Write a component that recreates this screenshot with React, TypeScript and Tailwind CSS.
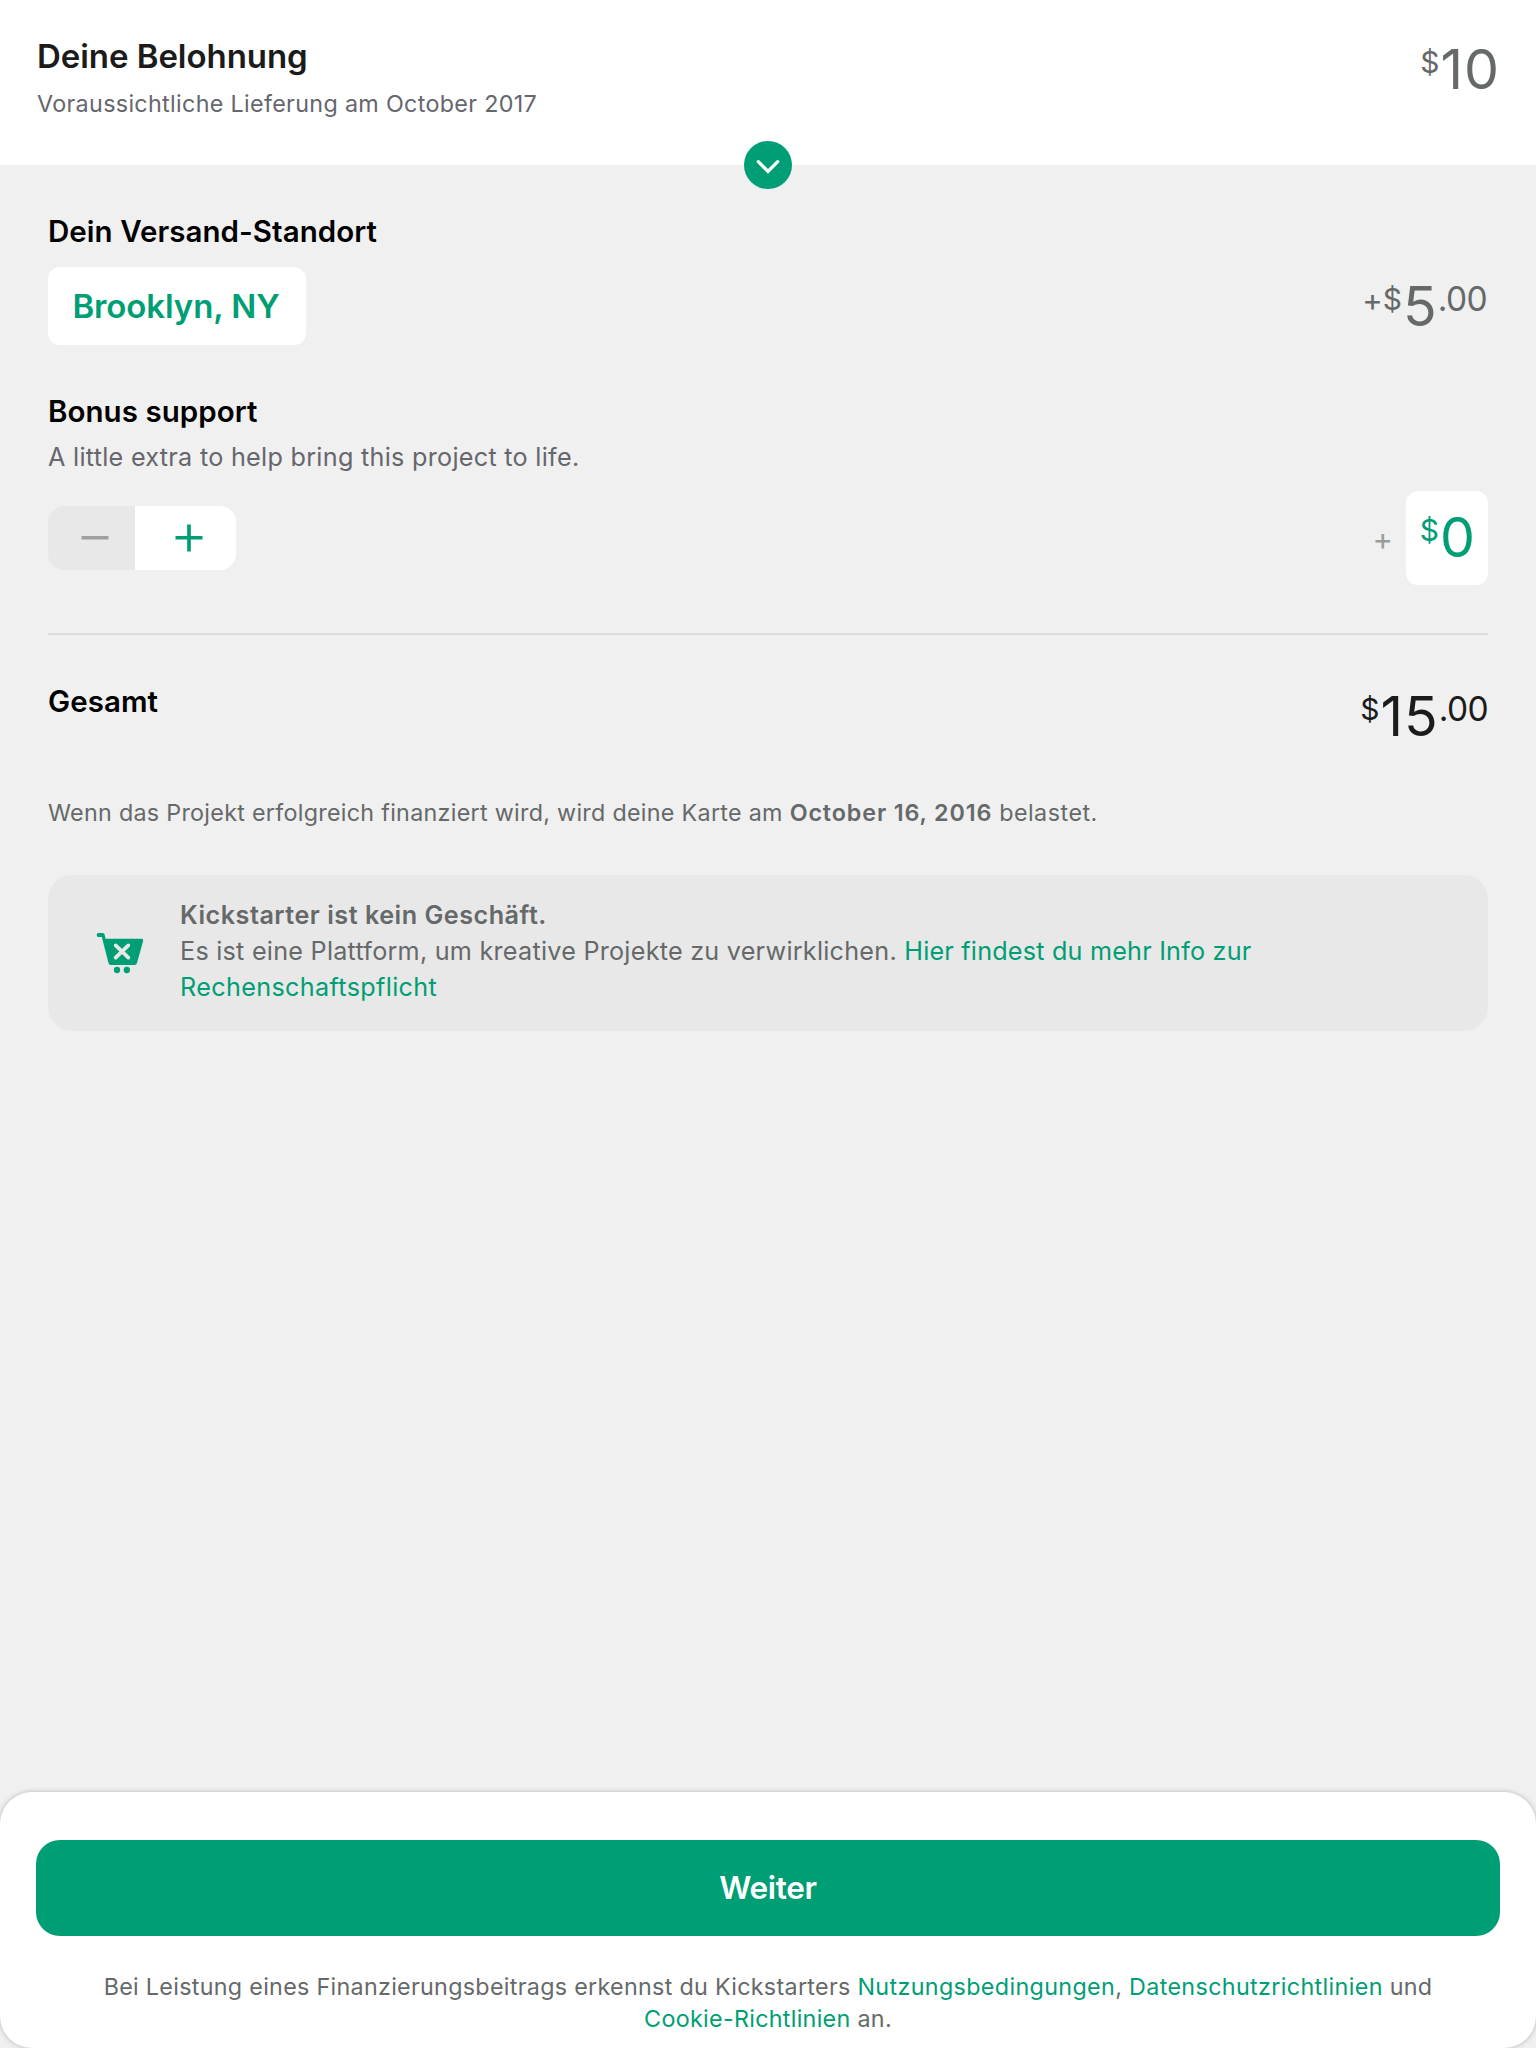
import type { ReactNode } from "react";

function Amount({ sign = false, whole, cents, className }: { sign?: boolean; whole: string; cents?: string; className: string }) {
  return (
    <div className={`flex h-16 items-start whitespace-nowrap ${className}`}>
      {sign && <span className="text-[31px] leading-[51px]">+</span>}
      <span className="mr-px text-[30px] leading-[50px]">$</span>
      <span className="text-[55.5px] leading-[63px] tracking-[1px]">{whole}</span>
      {cents && <span className="text-[33.5px] leading-[51px] tracking-[-0.6px]">{cents}</span>}
    </div>
  );
}

function Heading({ children }: { children: ReactNode }) {
  return <h2 className="text-[29.5px] leading-9 font-semibold tracking-[0.05px] text-black">{children}</h2>;
}

function Link({ children, className = "" }: { children: ReactNode; className?: string }) {
  return (
    <a href="#" className={`text-[#009e74] ${className}`}>
      {children}
    </a>
  );
}

function CartIcon() {
  return (
    <svg className="size-[62px] shrink-0" viewBox="0 0 186 186" fill="#009e74">
      <path d="M25 33H38Q43 33 44 38L46.500 50H155Q161 50 159.500 56L141 123Q139 129 133 129H63Q57 129 55.500 123L35.500 45H25Q20 45 20 39Q20 33 25 33Z" />
      <path d="M77 70L115 107M115 70L77 107" stroke="#e8e8e8" strokeWidth="11" strokeLinecap="round" />
      <circle cx="81" cy="144" r="9.500" />
      <circle cx="110.500" cy="144" r="9.500" />
    </svg>
  );
}

function Stepper() {
  return (
    <div className="flex h-16 w-[188px] overflow-hidden rounded-2xl">
      <button className="flex w-[87px] items-center bg-[#e8e8e8] pl-[33px]" aria-label="Weniger">
        <svg className="h-7 w-7" viewBox="0 0 28 28">
          <path d="M0.500 13.750H27.500" stroke="#a0a0a0" strokeWidth="3.700" />
        </svg>
      </button>
      <button className="flex flex-1 items-center bg-white pl-10" aria-label="Mehr">
        <svg className="h-7 w-7" viewBox="0 0 28 28">
          <path d="M0.500 13.750H27.500M14 0.500V27.500" stroke="#009e74" strokeWidth="3.700" />
        </svg>
      </button>
    </div>
  );
}

export default function App() {
  return (
    <div className="flex h-[2048px] w-[1536px] flex-col bg-[#f0f0f0] font-[Inter,sans-serif] text-[#656969]">
      <header className="relative flex h-[165px] shrink-0 justify-between bg-white px-9 pt-9">
        <div>
          <h1 className="pl-px text-[33px] leading-10 font-semibold tracking-[-0.05px] text-[#1b1b1b]">Deine Belohnung</h1>
          <p className="mt-3.5 pl-px text-[23.3px] leading-7 tracking-[0.33px] text-[#66666d]">Voraussichtliche Lieferung am October 2017</p>
        </div>
        <Amount whole="10" className="pt-px text-[#656969]" />
        <button className="absolute top-[141px] left-[744px] flex size-12 items-center justify-center rounded-full bg-[#009e74]" aria-label="Details">
          <svg className="size-12" viewBox="0 0 48 48" fill="none">
            <path d="M14.300 20.700L24 30.500L33.700 20.700" stroke="white" strokeWidth="3.300" strokeLinecap="round" />
          </svg>
        </button>
      </header>

      <main className="flex grow flex-col px-12 pt-12">
        <Heading>Dein Versand-Standort</Heading>
        <div className="mt-[18px] flex items-start justify-between">
          <button className="h-[78px] w-[258px] rounded-xl bg-white pt-0.5 pr-0.5 text-[33px] font-semibold tracking-[-0.1px] text-[#009e74]">
            Brooklyn, NY
          </button>
          <Amount sign whole="5" cents=".00" className="mt-[7px] pr-px text-[#656969]" />
        </div>

        <div className="mt-12">
          <Heading>Bonus support</Heading>
          <p className="mt-3 text-[25.2px] leading-8 tracking-[0.28px] text-[#66666d]">A little extra to help bring this project to life.</p>
        </div>
        <div className="mt-[18px] flex items-center justify-between">
          <Stepper />
          <div className="flex items-center">
            <span className="mr-[13px] pt-0.5 text-[31px] leading-8 text-[#9a9d9d]">+</span>
            <div className="flex h-[94px] w-[82px] justify-center rounded-xl bg-white pt-3.5 pl-0.5">
              <Amount whole="0" className="text-[#009e74]" />
            </div>
          </div>
        </div>

        <div className="mt-12 h-0.5 bg-[#dcdcdc]" />

        <div className="mt-12 flex items-start justify-between">
          <Heading>Gesamt</Heading>
          <Amount whole="15" cents=".00" className="mt-px text-[#1b1b1b]" />
        </div>

        <p className="mt-[51px] text-[23.3px] leading-7 tracking-[0.29px]">
          Wenn das Projekt erfolgreich finanziert wird, wird deine Karte am{" "}
          <strong className="font-semibold tracking-[0.88px]">October 16, 2016</strong> <span className="tracking-[0.5px]">belastet.</span>
        </p>

        <section className="mt-12 flex h-[156px] rounded-3xl bg-[#e8e8e8] pt-[22px] pl-[42px]">
          <div className="pt-[25px]">
            <CartIcon />
          </div>
          <p className="ml-7 text-[25.2px] leading-9 tracking-[0.24px]">
            <strong className="font-semibold tracking-[0.5px]">Kickstarter ist kein Geschäft.</strong>
            <br />
            Es ist eine Plattform, um kreative Projekte zu verwirklichen.{" "}
            <Link className="tracking-[0.2px]">
              Hier findest du mehr Info zur
              <br />
              <span className="tracking-[0.34px]">Rechenschaftspflicht</span>
            </Link>
          </p>
        </section>
      </main>

      <footer className="h-64 shrink-0 rounded-[32px] bg-white px-9 pt-12 shadow-[0_0_5px_rgba(0,0,0,0.25)]">
        <button className="h-24 w-full rounded-3xl bg-[#009e74] text-[31.5px] font-semibold tracking-[-0.3px] text-white">Weiter</button>
        <p className="mt-[35px] text-center text-[23.3px] leading-8 tracking-[0.3px]">
          Bei Leistung eines Finanzierungsbeitrags erkennst du Kickstarters <Link className="tracking-[0.36px]">Nutzungsbedingungen</Link>,{" "}
          <Link className="tracking-[0.36px]">Datenschutzrichtlinien</Link> und
          <br />
          <Link>Cookie-Richtlinien</Link> an.
        </p>
      </footer>
    </div>
  );
}
